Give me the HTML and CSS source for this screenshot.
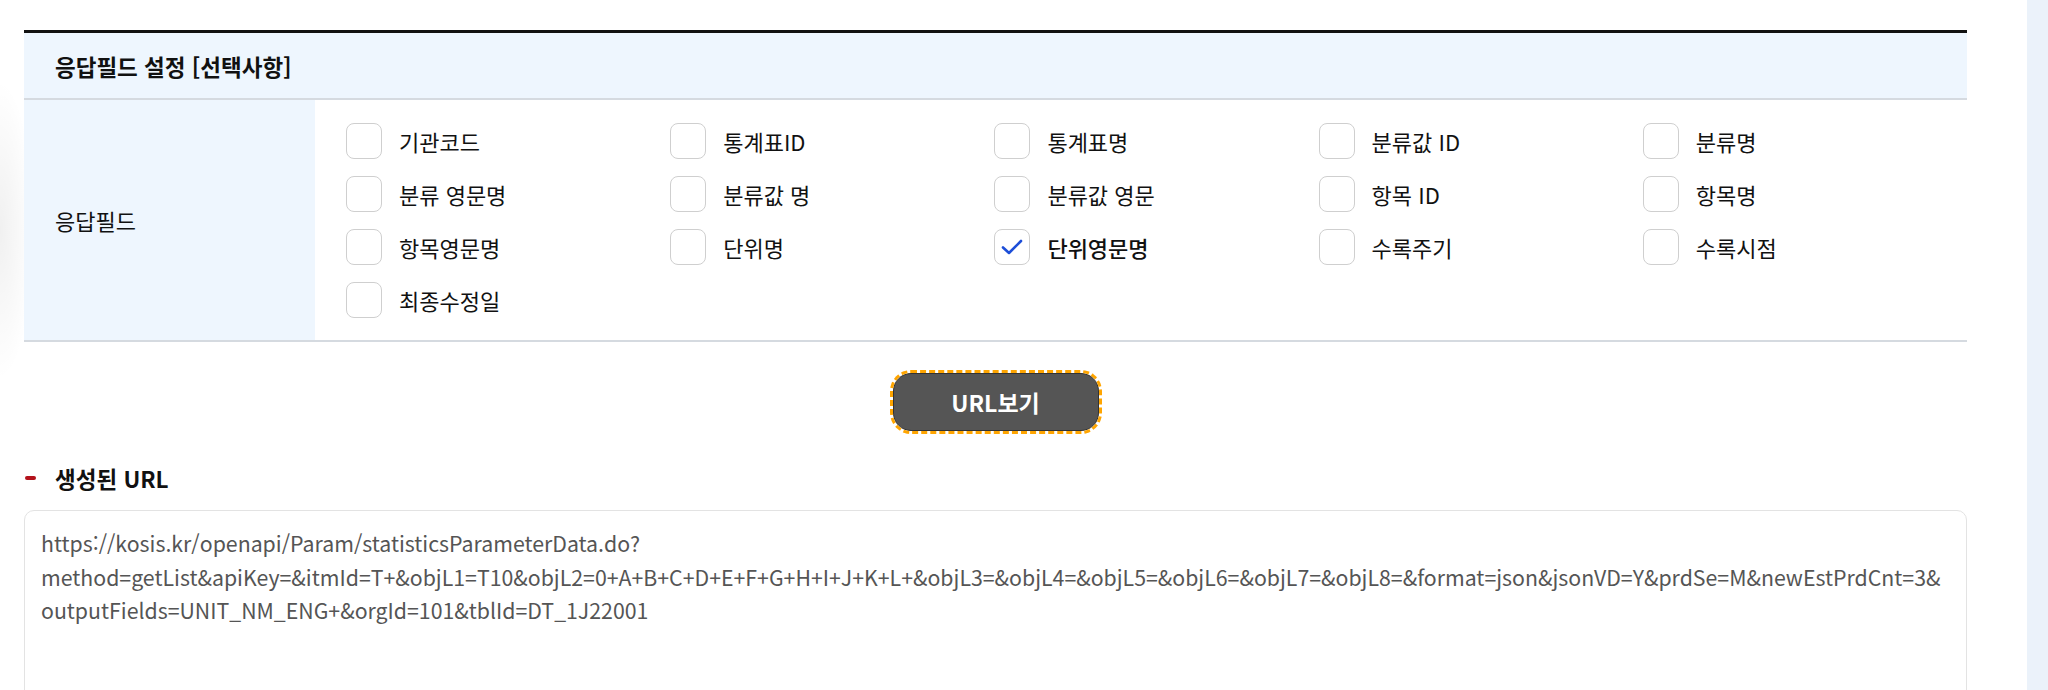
FILE: index.html
```html
<!DOCTYPE html>
<html lang="ko">
<head>
    <meta charset="UTF-8">
    <meta name="viewport" content="width=device-width, initial-scale=1.0">
    <title>응답필드 설정 - URL 생성</title>
    <link rel="stylesheet" href="styles.css">
</head>
<body>
    <div class="page">
        <div class="content">
            <!-- Response field table -->
            <div class="field-table">
                <div class="table-head">응답필드 설정 [선택사항]</div>
                <div class="table-row">
                    <div class="row-label">응답필드</div>
                    <div class="options">
                        <label class="option"><span class="box"></span>기관코드</label>
                        <label class="option"><span class="box"></span>통계표ID</label>
                        <label class="option"><span class="box"></span>통계표명</label>
                        <label class="option"><span class="box"></span>분류값 ID</label>
                        <label class="option"><span class="box"></span>분류명</label>
                        <label class="option"><span class="box"></span>분류 영문명</label>
                        <label class="option"><span class="box"></span>분류값 명</label>
                        <label class="option"><span class="box"></span>분류값 영문</label>
                        <label class="option"><span class="box"></span>항목 ID</label>
                        <label class="option"><span class="box"></span>항목명</label>
                        <label class="option"><span class="box"></span>항목영문명</label>
                        <label class="option"><span class="box"></span>단위명</label>
                        <label class="option checked">
                            <span class="box">
                                <svg width="22" height="16" viewBox="0 0 22 16"><path d="M2 8.5 L8 14 L20 2" fill="none" stroke="#1d4ed8" stroke-width="2.6" stroke-linecap="round" stroke-linejoin="round"/></svg>
                            </span>단위영문명</label>
                        <label class="option"><span class="box"></span>수록주기</label>
                        <label class="option"><span class="box"></span>수록시점</label>
                        <label class="option"><span class="box"></span>최종수정일</label>
                    </div>
                </div>
            </div>

            <div class="btn-area">
                <button class="btn-url">URL보기</button>
            </div>

            <!-- Generated URL -->
            <h3 class="sub-title">생성된 URL</h3>
            <div class="url-box">https://kosis.kr/openapi/Param/statisticsParameterData.do?<br>method=getList&amp;apiKey=&amp;itmId=T+&amp;objL1=T10&amp;objL2=0+A+B+C+D+E+F+G+H+I+J+K+L+&amp;objL3=&amp;objL4=&amp;objL5=&amp;objL6=&amp;objL7=&amp;objL8=&amp;format=json&amp;jsonVD=Y&amp;prdSe=M&amp;newEstPrdCnt=3&amp;<br>outputFields=UNIT_NM_ENG+&amp;orgId=101&amp;tblId=DT_1J22001</div>
        </div>
        <div class="side-strip"></div>
    </div>
</body>
</html>
```

FILE: styles.css
```css
/* Base */
body {
    margin: 0;
    padding: 0;
    background-color: #FFFFFF;
    background-image: radial-gradient(ellipse 34px 150px at 0 230px, rgba(0, 0, 0, 0.06), rgba(0, 0, 0, 0));
    background-repeat: no-repeat;
    color: #111111;
    font-family: "Noto Sans CJK KR", "Noto Sans", sans-serif;
    overflow: hidden;
}
.page {
    display: flex;
    min-height: 690px;
}
.content {
    width: 1943px;
    margin-left: 24px;
    padding-top: 30px;
}
.side-strip {
    width: 21px;
    margin-left: auto;
    background-color: #EBF2FA; /* Light Blue Gray */
}

/* Table */
.field-table {
    border-top: 3px solid #111111;
    border-bottom: 2px solid #D5DAE0;
}
.table-head {
    height: 65px;
    display: flex;
    align-items: center;
    padding-left: 31px;
    background-color: #EEF6FE;
    border-bottom: 2px solid #D5DAE0;
    font-size: 22.5px;
    font-weight: bold;
}
.table-row {
    display: flex;
}
.row-label {
    width: 260px;
    padding-left: 31px;
    display: flex;
    align-items: center;
    background-color: #EEF6FE;
    font-size: 22px;
}
.options {
    flex: 1;
    display: grid;
    grid-template-columns: repeat(5, 1fr);
    row-gap: 17px;
    padding: 23px 0 22px 31px;
}
.option {
    display: flex;
    align-items: center;
    gap: 17px;
    font-size: 22px;
    color: #111111;
    height: 36px;
}
.option.checked {
    font-weight: 500;
}
.box {
    width: 34px;
    height: 34px;
    border: 1px solid #CFCFCF;
    border-radius: 8px;
    background-color: #FFFFFF;
    display: flex;
    align-items: center;
    justify-content: center;
}

/* Button */
.btn-area {
    display: flex;
    justify-content: center;
    padding-top: 31px;
}
.btn-url {
    width: 206px;
    height: 58px;
    background-color: #555555;
    color: #FFFFFF;
    border: 1px solid #333333;
    border-radius: 18px;
    outline: 3px dashed #FFA500;
    outline-offset: 0;
    font-family: inherit;
    font-size: 23px;
    font-weight: bold;
}

/* Generated URL */
.sub-title {
    display: flex;
    align-items: center;
    gap: 19px;
    margin: 32px 0 17px 0;
    height: 30px;
    font-size: 22.5px;
    font-weight: bold;
}
.sub-title::before {
    content: "";
    width: 11px;
    height: 4px;
    border-radius: 2px;
    margin-left: 1px;
    background-color: #B3121B; /* Dark Red */
}
.url-box {
    height: 240px;
    border: 1px solid #E3E3E3;
    border-radius: 10px;
    padding: 15px 16px;
    font-size: 21.3px;
    line-height: 33.5px;
    color: #555555;
}
```
